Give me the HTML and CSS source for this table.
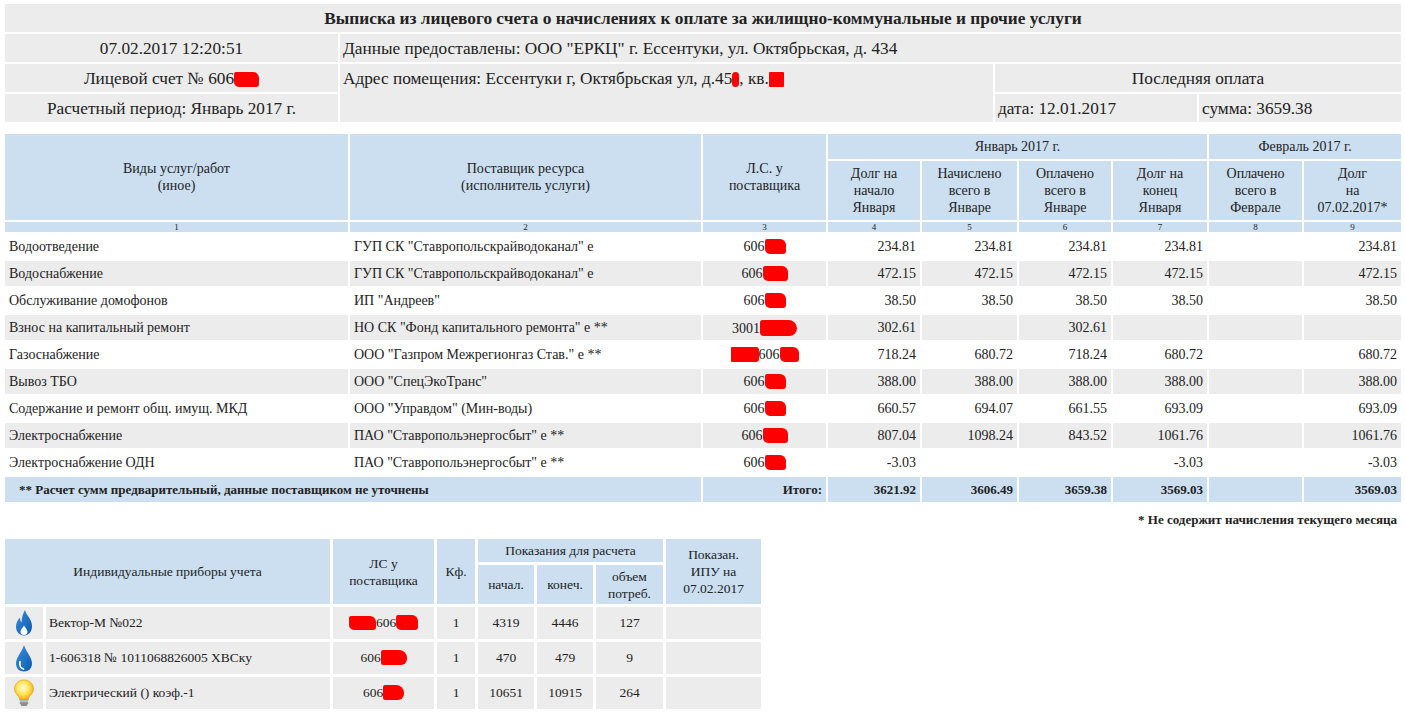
FILE: index.html
```html
<!DOCTYPE html>
<html lang="ru">
<head>
<meta charset="utf-8">
<title>Выписка из лицевого счета</title>
<link rel="stylesheet" href="styles.css">
</head>
<body>
<table class="info">
  <colgroup><col class="i1"><col class="i2"><col class="i3"><col class="i4"></colgroup>
  <tr><td colspan="4" class="title">Выписка из лицевого счета о начислениях к оплате за жилищно-коммунальные и прочие услуги</td></tr>
  <tr><td class="c">07.02.2017 12:20:51</td><td colspan="3">Данные предоставлены: ООО "ЕРКЦ" г. Ессентуки, ул. Октябрьская, д. 434</td></tr>
  <tr><td class="c">Лицевой счет № 606<span class="r r-acc"></span></td><td rowspan="2" class="top">Адрес помещения: Ессентуки г, Октябрьская ул, д.45<span class="r r-dot"></span>, кв.<span class="r r-kv"></span></td><td colspan="2" class="c">Последняя оплата</td></tr>
  <tr><td class="c">Расчетный период: Январь 2017 г.</td><td>дата: 12.01.2017</td><td>сумма: 3659.38</td></tr>
</table>

<table class="main">
  <colgroup><col class="m1"><col class="m2"><col class="m3"><col class="m4"><col class="m5"><col class="m6"><col class="m7"><col class="m8"><col class="m9"></colgroup>
  <tr class="h1">
    <th rowspan="2">Виды услуг/работ<br>(иное)</th>
    <th rowspan="2">Поставщик ресурса<br>(исполнитель услуги)</th>
    <th rowspan="2">Л.С. у<br>поставщика</th>
    <th colspan="4">Январь 2017 г.</th>
    <th colspan="2">Февраль 2017 г.</th>
  </tr>
  <tr class="h2">
    <th>Долг на<br>начало<br>Января</th>
    <th>Начислено<br>всего в<br>Январе</th>
    <th>Оплачено<br>всего в<br>Январе</th>
    <th>Долг на<br>конец<br>Января</th>
    <th>Оплачено<br>всего в<br>Феврале</th>
    <th>Долг<br>на<br>07.02.2017*</th>
  </tr>
  <tr class="nums"><th>1</th><th>2</th><th>3</th><th>4</th><th>5</th><th>6</th><th>7</th><th>8</th><th>9</th></tr>
  <tr class="row">
    <td>Водоотведение</td><td class="p">ГУП СК "Ставропольскрайводоканал" е</td><td class="c">606<span class="r r-a"></span></td>
    <td class="n">234.81</td><td class="n">234.81</td><td class="n">234.81</td><td class="n">234.81</td><td class="n"></td><td class="n">234.81</td>
  </tr>
  <tr class="row g">
    <td>Водоснабжение</td><td class="p">ГУП СК "Ставропольскрайводоканал" е</td><td class="c">606<span class="r r-b"></span></td>
    <td class="n">472.15</td><td class="n">472.15</td><td class="n">472.15</td><td class="n">472.15</td><td class="n"></td><td class="n">472.15</td>
  </tr>
  <tr class="row">
    <td>Обслуживание домофонов</td><td class="p">ИП "Андреев"</td><td class="c">606<span class="r r-a"></span></td>
    <td class="n">38.50</td><td class="n">38.50</td><td class="n">38.50</td><td class="n">38.50</td><td class="n"></td><td class="n">38.50</td>
  </tr>
  <tr class="row g">
    <td>Взнос на капитальный ремонт</td><td class="p">НО СК "Фонд капитального ремонта" е **</td><td class="c">3001<span class="r r-c"></span></td>
    <td class="n">302.61</td><td class="n"></td><td class="n">302.61</td><td class="n"></td><td class="n"></td><td class="n"></td>
  </tr>
  <tr class="row">
    <td>Газоснабжение</td><td class="p">ООО "Газпром Межрегионгаз Став." е **</td><td class="c"><span class="r r-d"></span>606<span class="r r-e"></span></td>
    <td class="n">718.24</td><td class="n">680.72</td><td class="n">718.24</td><td class="n">680.72</td><td class="n"></td><td class="n">680.72</td>
  </tr>
  <tr class="row g">
    <td>Вывоз ТБО</td><td class="p">ООО "СпецЭкоТранс"</td><td class="c">606<span class="r r-a"></span></td>
    <td class="n">388.00</td><td class="n">388.00</td><td class="n">388.00</td><td class="n">388.00</td><td class="n"></td><td class="n">388.00</td>
  </tr>
  <tr class="row">
    <td>Содержание и ремонт общ. имущ. МКД</td><td class="p">ООО "Управдом" (Мин-воды)</td><td class="c">606<span class="r r-a"></span></td>
    <td class="n">660.57</td><td class="n">694.07</td><td class="n">661.55</td><td class="n">693.09</td><td class="n"></td><td class="n">693.09</td>
  </tr>
  <tr class="row g">
    <td>Электроснабжение</td><td class="p">ПАО "Ставропольэнергосбыт" е **</td><td class="c">606<span class="r r-b"></span></td>
    <td class="n">807.04</td><td class="n">1098.24</td><td class="n">843.52</td><td class="n">1061.76</td><td class="n"></td><td class="n">1061.76</td>
  </tr>
  <tr class="row">
    <td>Электроснабжение ОДН</td><td class="p">ПАО "Ставропольэнергосбыт" е **</td><td class="c">606<span class="r r-a"></span></td>
    <td class="n">-3.03</td><td class="n"></td><td class="n"></td><td class="n">-3.03</td><td class="n"></td><td class="n">-3.03</td>
  </tr>
  <tr class="row total">
    <td colspan="2" class="note">** Расчет сумм предварительный, данные поставщиком не уточнены</td>
    <td class="n">Итого:</td>
    <td class="n">3621.92</td><td class="n">3606.49</td><td class="n">3659.38</td><td class="n">3569.03</td><td class="n"></td><td class="n">3569.03</td>
  </tr>
</table>

<div class="footnote">* Не содержит начисления текущего месяца</div>

<table class="meters">
  <colgroup><col class="b1"><col class="b2"><col class="b3"><col class="b4"><col class="b5"><col class="b6"><col class="b7"><col class="b8"></colgroup>
  <tr class="mh1">
    <th colspan="2" rowspan="2">Индивидуальные приборы учета</th>
    <th rowspan="2">ЛС у<br>поставщика</th>
    <th rowspan="2">Кф.</th>
    <th colspan="3">Показания для расчета</th>
    <th rowspan="2">Показан.<br>ИПУ на<br>07.02.2017</th>
  </tr>
  <tr class="mh2">
    <th>начал.</th><th>конеч.</th><th>объем<br>потреб.</th>
  </tr>
  <tr class="mrow">
    <td class="ic">
      <svg width="20" height="26" viewBox="0 0 20 26">
        <defs><linearGradient id="gf" x1="0" y1="0" x2="1" y2="1"><stop offset="0" stop-color="#3a8ee0"/><stop offset="1" stop-color="#0c58a8"/></linearGradient></defs>
        <path d="M11 0 C12 5 18 9 18 16 C18 22 14.5 25.5 10 25.5 C5.5 25.5 2 22 2 16.5 C2 12.5 4 9.5 6 7.5 C6 10 6.5 11.5 7.5 12.5 C7.5 7.5 9 3.5 11 0 Z" fill="url(#gf)"/>
        <path d="M10 15.5 C11.5 18 13.5 19.5 13.5 22 C13.5 24 12 25 10 25 C8 25 6.5 24 6.5 22 C6.5 19.5 8.5 18 10 15.5 Z" fill="#fff"/>
      </svg>
    </td>
    <td class="nm">Вектор-М №022</td>
    <td class="c"><span class="r r-f"></span>606<span class="r r-g"></span></td>
    <td class="c">1</td><td class="c">4319</td><td class="c">4446</td><td class="c">127</td><td></td>
  </tr>
  <tr class="mrow">
    <td class="ic">
      <svg width="18" height="27" viewBox="0 0 18 27">
        <defs><linearGradient id="gw" x1="0" y1="0" x2="1" y2="1"><stop offset="0" stop-color="#3c92e2"/><stop offset="1" stop-color="#0b5aab"/></linearGradient></defs>
        <path d="M9 0 C11 7 17 12 17 18.5 C17 23.5 13.5 26.5 9 26.5 C4.5 26.5 1 23.5 1 18.5 C1 12 7 7 9 0 Z" fill="url(#gw)"/>
        <path d="M5 17 C4.3 20.5 5.8 23.3 8.5 24" fill="none" stroke="#fff" stroke-width="1.8" stroke-linecap="round"/>
      </svg>
    </td>
    <td class="nm">1-606318 № 1011068826005 ХВСку</td>
    <td class="c">606<span class="r r-h"></span></td>
    <td class="c">1</td><td class="c">470</td><td class="c">479</td><td class="c">9</td><td></td>
  </tr>
  <tr class="mrow">
    <td class="ic">
      <svg width="22" height="28" viewBox="0 0 22 28">
        <defs><radialGradient id="gb" cx="0.45" cy="0.4" r="0.6"><stop offset="0" stop-color="#fffbd8"/><stop offset="0.55" stop-color="#ffe35a"/><stop offset="1" stop-color="#f0a800"/></radialGradient></defs>
        <path d="M11 1 C16.5 1 20.5 5 20.5 10 C20.5 13.5 18 15.5 16.5 17.5 C15.5 19 15.3 20 15.3 21 L6.7 21 C6.7 20 6.5 19 5.5 17.5 C4 15.5 1.5 13.5 1.5 10 C1.5 5 5.5 1 11 1 Z" fill="url(#gb)" stroke="#e09a00" stroke-width="0.6"/>
        <rect x="6.8" y="21" width="8.4" height="2.2" fill="#b9b9b9"/>
        <rect x="6.8" y="23.2" width="8.4" height="2" fill="#8e8e8e"/>
        <rect x="7.8" y="25.2" width="6.4" height="1.6" rx="0.8" fill="#6f6f6f"/>
      </svg>
    </td>
    <td class="nm">Электрический () коэф.-1</td>
    <td class="c">606<span class="r r-i"></span></td>
    <td class="c">1</td><td class="c">10651</td><td class="c">10915</td><td class="c">264</td><td></td>
  </tr>
</table>
</body>
</html>
```

FILE: styles.css
```css
html, body {
  margin: 0;
  padding: 0;
  background: #fff;
}
body {
  padding: 3px 0 0 3px;
  font-family: "Liberation Serif", "Times New Roman", serif;
  color: #222;
}
table {
  border-collapse: separate;
  table-layout: fixed;
}
td, th {
  padding: 0;
  overflow: hidden;
  white-space: nowrap;
}

/* ---------- top info table ---------- */
.info {
  width: 1400px;
  border-spacing: 2px;
  margin-top: -1px;
  font-size: 17.25px;
}
.info .i1 { width: 333px; }
.info .i2 { width: 653px; }
.info .i3 { width: 202px; }
.info .i4 { width: 202px; }
.info td {
  background: #ececec;
  height: 27px;
  padding: 1px 3px 0;
  vertical-align: middle;
}
.info td.title {
  text-align: center;
  font-weight: bold;
  font-size: 17.3px;
}
.info td.c { text-align: center; }
.info td.top { vertical-align: top; padding-top: 5px; }

/* ---------- main charges table ---------- */
.main {
  width: 1400px;
  border-spacing: 2px;
  margin-top: 8px;
  font-size: 14px;
}
.main .m1 { width: 343px; }
.main .m2 { width: 351px; }
.main .m3 { width: 123px; }
.main .m4 { width: 92px; }
.main .m5 { width: 95px; }
.main .m6 { width: 92px; }
.main .m7 { width: 94px; }
.main .m8 { width: 93px; }
.main .m9 { width: 97px; }
.main th {
  background: #cbdff1;
  font-weight: normal;
  text-align: center;
  vertical-align: middle;
  line-height: 17px;
}
.main tr.h1 th { height: 25px; }
.main tr.h2 th { height: 59px; }
.main tr.nums th {
  height: 10px;
  font-size: 9px;
  line-height: 10px;
}
.main tr.row td {
  height: 24px;
  padding: 1px 4px 0;
  vertical-align: middle;
}
.main tr.row.g td { background: #ececec; }
.main td.p { padding-left: 2px; }
.main td.c { text-align: center; padding-left: 0; padding-right: 0; }
.main td.n { text-align: right; padding-right: 5px; }
.main tr.total td {
  background: #cbdff1;
  font-weight: bold;
  font-size: 13px;
}
.main tr.total td.note {
  padding-left: 14px;
  font-size: 13px;
}

.footnote {
  width: 1394px;
  height: 32px;
  line-height: 32px;
  text-align: right;
  font-weight: bold;
  font-size: 13px;
}

/* ---------- meters table ---------- */
.meters {
  width: 762px;
  border-spacing: 3px;
  margin-left: -1px;
  font-size: 13.5px;
}
.meters .b1 { width: 38px; }
.meters .b2 { width: 284px; }
.meters .b3 { width: 101px; }
.meters .b4 { width: 38px; }
.meters .b5 { width: 56px; }
.meters .b6 { width: 56px; }
.meters .b7 { width: 67px; }
.meters .b8 { width: 95px; }
.meters th {
  background: #cbdff1;
  font-weight: normal;
  text-align: center;
  vertical-align: middle;
  line-height: 17px;
}
.meters tr.mh1 th { height: 23px; }
.meters tr.mh2 th { height: 39px; }
.meters tr.mrow td {
  background: #ececec;
  height: 32px;
  vertical-align: middle;
}
.meters td.ic { text-align: center; line-height: 0; }
.meters td.ic svg { vertical-align: middle; }
.meters td.nm { padding-left: 3px; }
.meters td.c { text-align: center; }

/* ---------- redaction marks ---------- */
.r {
  display: inline-block;
  height: 15px;
  background: #ff0000;
  vertical-align: -3px;
  border-radius: 2px 6px 3px 5px;
}
.r-acc { width: 25px; }
.r-dot { width: 7px; border-radius: 4px; }
.r-kv { width: 15px; border-radius: 1px; }
.r-a { width: 21px; }
.r-b { width: 25px; }
.r-c { width: 37px; height: 16px; border-radius: 3px 9px 8px 4px; }
.r-d { width: 28px; border-radius: 1px 3px 3px 1px; }
.r-e { width: 19px; }
.r-f { width: 27px; height: 14px; }
.r-g { width: 22px; }
.r-h { width: 26px; border-radius: 2px 8px 6px 2px; }
.r-i { width: 21px; border-radius: 2px 8px 6px 2px; }
```
